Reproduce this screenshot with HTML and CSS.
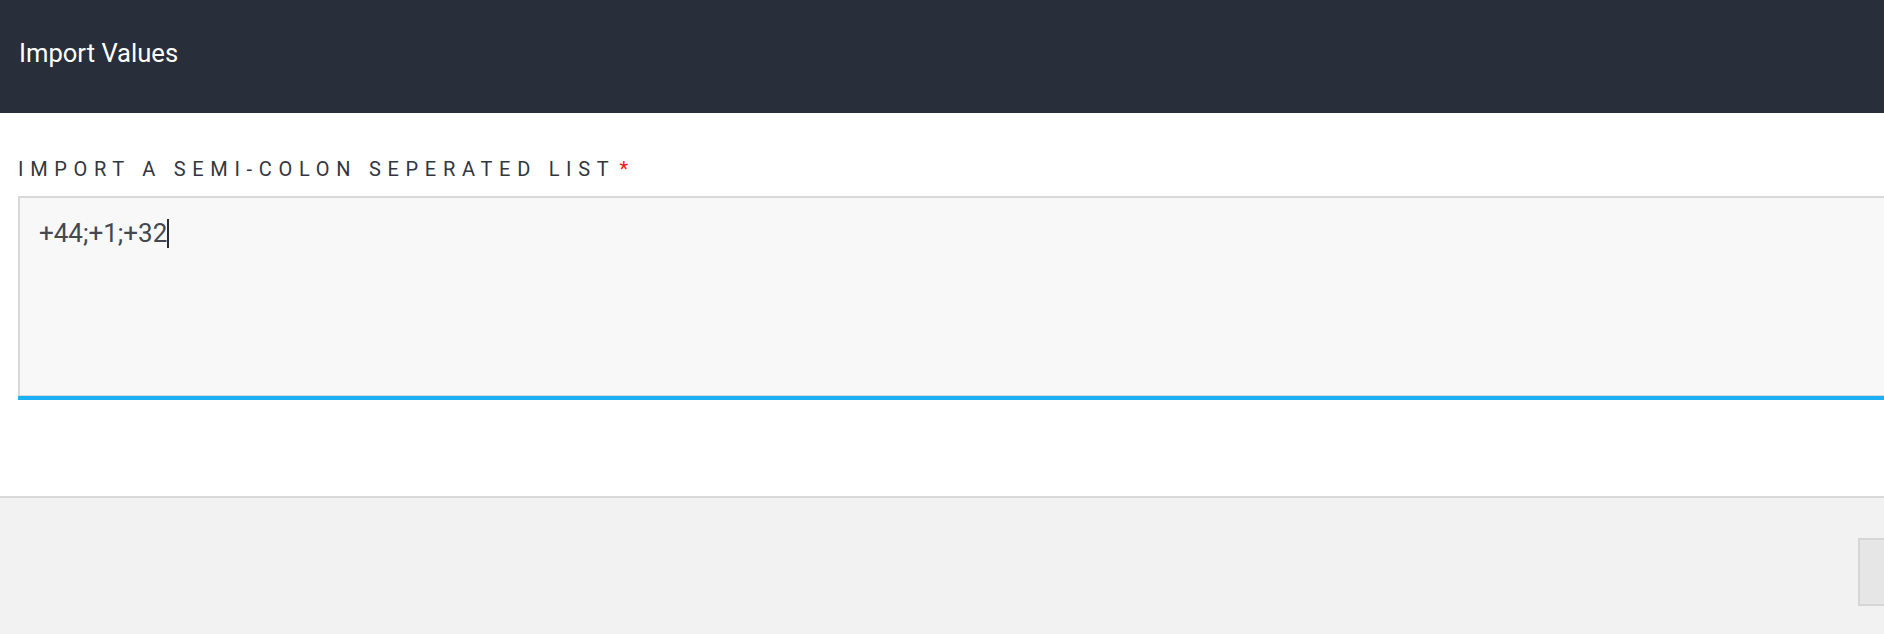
FILE: index.html
```html
<!DOCTYPE html>
<html lang="en">
<head>
<meta charset="utf-8">
<title>Import Values</title>
<link rel="stylesheet" href="styles.css">
</head>
<body>
<div class="modal">
  <header class="modal-header">
    <h1 class="modal-title">Import Values</h1>
  </header>
  <section class="modal-body">
    <label class="field-label" for="values">Import a semi-colon seperated list<span class="required">*</span></label>
    <div class="field">
      <div class="field-input" id="values">+44;+1;+32<span class="caret"></span></div>
    </div>
  </section>
  <footer class="modal-footer">
    <button class="btn" type="button" aria-label="Import"></button>
  </footer>
</div>
</body>
</html>
```

FILE: styles.css
```css
html, body {
  margin: 0;
  padding: 0;
  overflow: hidden;
  background: #f2f2f2;
}

body {
  font-family: Roboto, "Liberation Sans", sans-serif;
}

.modal {
  width: 2060px;
  height: 634px;
  display: flex;
  flex-direction: column;
  background: #ffffff;
}

.modal-header {
  height: 113px;
  box-sizing: border-box;
  background: #282e3a;
  padding: 38px 19px 0 19px;
}

.modal-title {
  margin: 0;
  font-size: 25.6px;
  line-height: 30px;
  font-weight: 400;
  color: #ffffff;
}

.modal-body {
  padding: 44px 18px 0 18px;
  height: 383px;
  box-sizing: border-box;
  background: #ffffff;
}

.field-label {
  display: block;
  font-size: 20px;
  line-height: 24px;
  font-weight: 400;
  letter-spacing: 6.7px;
  text-transform: uppercase;
  color: #33363e;
}

.required {
  color: #f01818;
  margin-left: 4px;
  letter-spacing: 0;
}

.field {
  margin-top: 15px;
  border-bottom: 4px solid #1cb0f6;
}

.field-input {
  height: 200px;
  box-sizing: border-box;
  border: 2px solid #d9d9d9;
  border-bottom-width: 1.5px;
  background: #f8f8f8;
  padding: 20px 19px;
  font-size: 26px;
  line-height: 30px;
  font-weight: 400;
  color: #45484f;
}

.caret {
  display: inline-block;
  width: 2px;
  height: 29px;
  background: #2a2d33;
  vertical-align: -6px;
}

.modal-footer {
  flex: 1;
  background: #f2f2f2;
  border-top: 2px solid #d9d9d9;
  display: flex;
  justify-content: flex-end;
  align-items: flex-start;
  padding: 40px 42px 0 0;
}

.btn {
  width: 160px;
  height: 68px;
  box-sizing: border-box;
  border: 2px solid #d6d6d6;
  background: #e6e6e6;
  padding: 0;
}
```
